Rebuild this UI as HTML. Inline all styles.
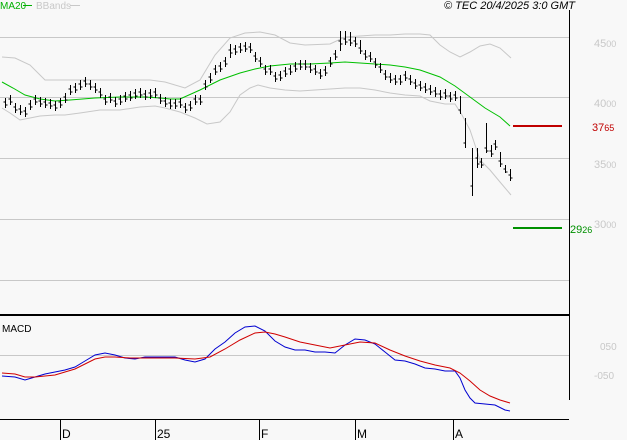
<!DOCTYPE html>
<html><head><meta charset="utf-8"><style>
html,body{margin:0;padding:0;background:#f8f8f8;}
svg{display:block;font-family:"Liberation Sans",sans-serif;}
</style></head><body>
<svg width="627" height="440" viewBox="0 0 627 440" xmlns="http://www.w3.org/2000/svg">
<rect width="627" height="440" fill="#f8f8f8"/>
<g stroke="#c8c8c8" stroke-width="1">
<line x1="0" y1="37.5" x2="569" y2="37.5"/>
<line x1="0" y1="97.5" x2="569" y2="97.5"/>
<line x1="0" y1="158.5" x2="569" y2="158.5"/>
<line x1="0" y1="219.5" x2="569" y2="219.5"/>
<line x1="0" y1="280.5" x2="569" y2="280.5"/>
<line x1="0" y1="355.5" x2="569" y2="355.5"/>
</g>
<line x1="569.5" y1="10" x2="569.5" y2="400" stroke="#000"/>
<line x1="0" y1="315" x2="569" y2="315" stroke="#000" stroke-width="2"/>
<line x1="0" y1="419.5" x2="569" y2="419.5" stroke="#000"/>
<g stroke="#000"><line x1="60.5" y1="419" x2="60.5" y2="440"/><line x1="155.5" y1="419" x2="155.5" y2="440"/><line x1="259.5" y1="419" x2="259.5" y2="440"/><line x1="355.5" y1="419" x2="355.5" y2="440"/><line x1="453.5" y1="419" x2="453.5" y2="440"/></g>
<g font-size="12" fill="#000"><text x="62" y="438">D</text><text x="157" y="438">25</text><text x="261" y="438">F</text><text x="357" y="438">M</text><text x="455" y="438">A</text></g>
<polyline fill="none" stroke="#c8c8c8" points="2,57 15,58 30,65 45,80 60,80 80,80 100,80 130,80 150,80 165,82 185,88 200,80 215,55 230,38 245,33 260,32 275,35 290,43 305,45 330,44 345,37 360,36 375,35 390,35 405,34 420,34 430,35 440,45 450,52 460,57 470,52 480,46 490,44 500,48 511,58"/>
<polyline fill="none" stroke="#c8c8c8" points="2,108 10,113 20,120 30,118 40,116 55,115 65,115 80,113 100,110 120,110 140,107 155,106 165,108 180,112 195,118 207,124 220,122 230,112 240,95 250,88 258,85 270,88 285,90 300,91 315,90 330,89 345,88 360,88 375,90 390,93 405,95 420,96 430,101 445,104 455,104 462,115 470,130 480,160 490,170 500,182 511,195"/>
<polyline fill="none" stroke="#00c000" points="2,82 13,88 25,95 40,99 55,101 70,100 95,98 120,97 145,97 160,98 170,99 180,99 200,90 220,80 240,73 255,69 270,66 290,64 310,64 330,63 345,62 360,63 375,64 390,65 405,67 420,70 440,77 455,86 470,97 485,108 500,117 510,126"/>
<path stroke="#000" fill="none" stroke-width="1" d="M5.5,98v10m-2,-6h2m0,3h2 M10.5,95v10m-2,-6h2m0,3h2 M15.5,103v10m-2,-6h2m0,3h2 M20.5,105v10m-2,-6h2m0,3h2 M25.5,107v10m-2,-6h2m0,3h2 M30.5,100v10m-2,-6h2m0,3h2 M35.5,95v10m-2,-6h2m0,3h2 M40.5,97v10m-2,-6h2m0,3h2 M45.5,98v10m-2,-6h2m0,3h2 M50.5,99v10m-2,-6h2m0,3h2 M55.5,101v10m-2,-6h2m0,3h2 M60.5,98v10m-2,-6h2m0,3h2 M65.5,93v10m-2,-6h2m0,3h2 M70.5,85v10m-2,-6h2m0,3h2 M75.5,83v10m-2,-6h2m0,3h2 M80.5,80v10m-2,-6h2m0,3h2 M85.5,77v10m-2,-6h2m0,3h2 M90.5,80v10m-2,-6h2m0,3h2 M95.5,83v10m-2,-6h2m0,3h2 M100.5,88v10m-2,-6h2m0,3h2 M105.5,95v10m-2,-6h2m0,3h2 M110.5,93v10m-2,-6h2m0,3h2 M115.5,97v10m-2,-6h2m0,3h2 M120.5,95v10m-2,-6h2m0,3h2 M125.5,92v10m-2,-6h2m0,3h2 M130.5,91v10m-2,-6h2m0,3h2 M135.5,89v10m-2,-6h2m0,3h2 M140.5,88v10m-2,-6h2m0,3h2 M145.5,90v10m-2,-6h2m0,3h2 M150.5,89v10m-2,-6h2m0,3h2 M155.5,88v10m-2,-6h2m0,3h2 M160.5,94v10m-2,-6h2m0,3h2 M165.5,97v10m-2,-6h2m0,3h2 M170.5,99v10m-2,-6h2m0,3h2 M175.5,99v10m-2,-6h2m0,3h2 M180.5,98v10m-2,-6h2m0,3h2 M185.5,103v10m-2,-6h2m0,3h2 M190.5,101v10m-2,-6h2m0,3h2 M195.5,95v10m-2,-6h2m0,3h2 M200.5,95v10m-2,-6h2m0,3h2 M205.5,80v10m-2,-6h2m0,3h2 M210.5,73v10m-2,-6h2m0,3h2 M215.5,65v10m-2,-6h2m0,3h2 M220.5,62v10m-2,-6h2m0,3h2 M225.5,57v10m-2,-6h2m0,3h2 M230.5,44v14m-2,-8h2m0,3h2 M235.5,45v10m-2,-6h2m0,3h2 M240.5,43v10m-2,-6h2m0,3h2 M245.5,42v10m-2,-6h2m0,3h2 M250.5,43v10m-2,-6h2m0,3h2 M255.5,52v10m-2,-6h2m0,3h2 M260.5,57v10m-2,-6h2m0,3h2 M265.5,65v10m-2,-6h2m0,3h2 M270.5,65v10m-2,-6h2m0,3h2 M275.5,72v10m-2,-6h2m0,3h2 M280.5,71v10m-2,-6h2m0,3h2 M285.5,67v10m-2,-6h2m0,3h2 M290.5,65v10m-2,-6h2m0,3h2 M295.5,62v10m-2,-6h2m0,3h2 M300.5,60v10m-2,-6h2m0,3h2 M305.5,60v10m-2,-6h2m0,3h2 M310.5,63v10m-2,-6h2m0,3h2 M315.5,65v10m-2,-6h2m0,3h2 M320.5,69v10m-2,-6h2m0,3h2 M325.5,66v10m-2,-6h2m0,3h2 M330.5,57v10m-2,-6h2m0,3h2 M335.5,50v10m-2,-6h2m0,3h2 M340.5,31v20m-2,-10h2m0,3h2 M345.5,31v14m-2,-6h2m0,3h2 M350.5,32v14m-2,-6h2m0,3h2 M355.5,37v10m-2,-6h2m0,3h2 M360.5,40v14m-2,-6h2m0,3h2 M365.5,50v10m-2,-6h2m0,3h2 M370.5,52v10m-2,-6h2m0,3h2 M375.5,58v10m-2,-6h2m0,3h2 M380.5,63v10m-2,-6h2m0,3h2 M385.5,70v10m-2,-6h2m0,3h2 M390.5,73v10m-2,-6h2m0,3h2 M395.5,75v10m-2,-6h2m0,3h2 M400.5,75v10m-2,-6h2m0,3h2 M405.5,71v10m-2,-6h2m0,3h2 M410.5,75v10m-2,-6h2m0,3h2 M415.5,79v10m-2,-6h2m0,3h2 M420.5,81v10m-2,-6h2m0,3h2 M425.5,83v10m-2,-6h2m0,3h2 M430.5,85v10m-2,-6h2m0,3h2 M435.5,87v10m-2,-6h2m0,3h2 M440.5,90v10m-2,-6h2m0,3h2 M445.5,89v10m-2,-6h2m0,3h2 M450.5,92v10m-2,-6h2m0,3h2 M455.5,91v10m-2,-6h2m0,3h2 M460.5,96v18m-2,-4h2 M465.5,118v30m-2,-5h2 M472.5,148v48m-2,-10h2 M477.5,148v20m-2,-10h2m0,6h2 M481.5,158v10m-2,-6h2m0,3h2 M486.5,123v30m-2,-5h2m0,3h2 M491.5,145v12m-2,-6h2m0,3h2 M495.5,140v10m-2,-6h2m0,3h2 M500.5,152v15m-2,-6h2m0,3h2 M505.5,165v8m-2,-4h2m0,3h2 M510.5,169v12m-2,-6h2m0,3h2"/>
<line x1="513" y1="126" x2="562" y2="126" stroke="#c00000" stroke-width="2"/>
<line x1="513" y1="228" x2="562" y2="228" stroke="#009000" stroke-width="2"/>
<text x="592" y="131" font-size="11" fill="#c00000">37<tspan font-size="9">65</tspan></text>
<text x="570" y="233" font-size="11" fill="#009000">29<tspan font-size="9">26</tspan></text>
<g font-size="11" fill="#c8c8c8"><text x="594" y="47">45<tspan font-size="9">00</tspan></text><text x="594" y="107">40<tspan font-size="9">00</tspan></text><text x="594" y="168">35<tspan font-size="9">00</tspan></text><text x="594" y="228">30<tspan font-size="9">00</tspan></text><text x="600" y="350" font-size="10">050</text><text x="594" y="379" font-size="10">-050</text></g>
<polyline fill="none" stroke="#0000d0" points="2,376 15,377 25,380 35,377 45,374 55,372 65,370 75,367 85,361 95,355 105,353 115,355 125,358 135,359 145,357 160,357 175,357 185,360 195,362 205,359 215,349 225,342 235,333 245,327 255,326 265,331 275,341 285,347 295,350 305,350 315,352 325,352 335,353 345,345 355,339 365,340 375,344 385,352 395,360 405,361 415,364 425,368 435,369 445,371 455,371 460,378 465,390 470,398 475,403 485,404 495,405 505,410 510,411"/>
<polyline fill="none" stroke="#d00000" points="2,373 15,374 25,377 35,377 45,376 55,375 65,372 75,369 85,364 95,359 105,357 115,357 130,358 150,358 175,358 195,359 210,357 225,349 240,340 255,333 265,332 275,334 285,337 300,342 315,345 330,348 345,345 360,342 375,343 390,350 405,356 420,361 435,365 450,368 460,373 470,381 480,390 490,396 500,400 510,403"/>
<text x="2" y="332" font-size="10" fill="#000">MACD</text>
<text x="0" y="9" font-size="10" fill="#00b000">MA20</text>
<line x1="23" y1="5.5" x2="32" y2="5.5" stroke="#00b000"/>
<text x="36" y="9" font-size="10" fill="#c8c8c8">BBands</text>
<line x1="70" y1="5.5" x2="80" y2="5.5" stroke="#c8c8c8"/>
<text x="575" y="9" font-size="11" font-style="italic" fill="#000" text-anchor="end">© TEC 20/4/2025 3:0 GMT</text>
</svg>
</body></html>
